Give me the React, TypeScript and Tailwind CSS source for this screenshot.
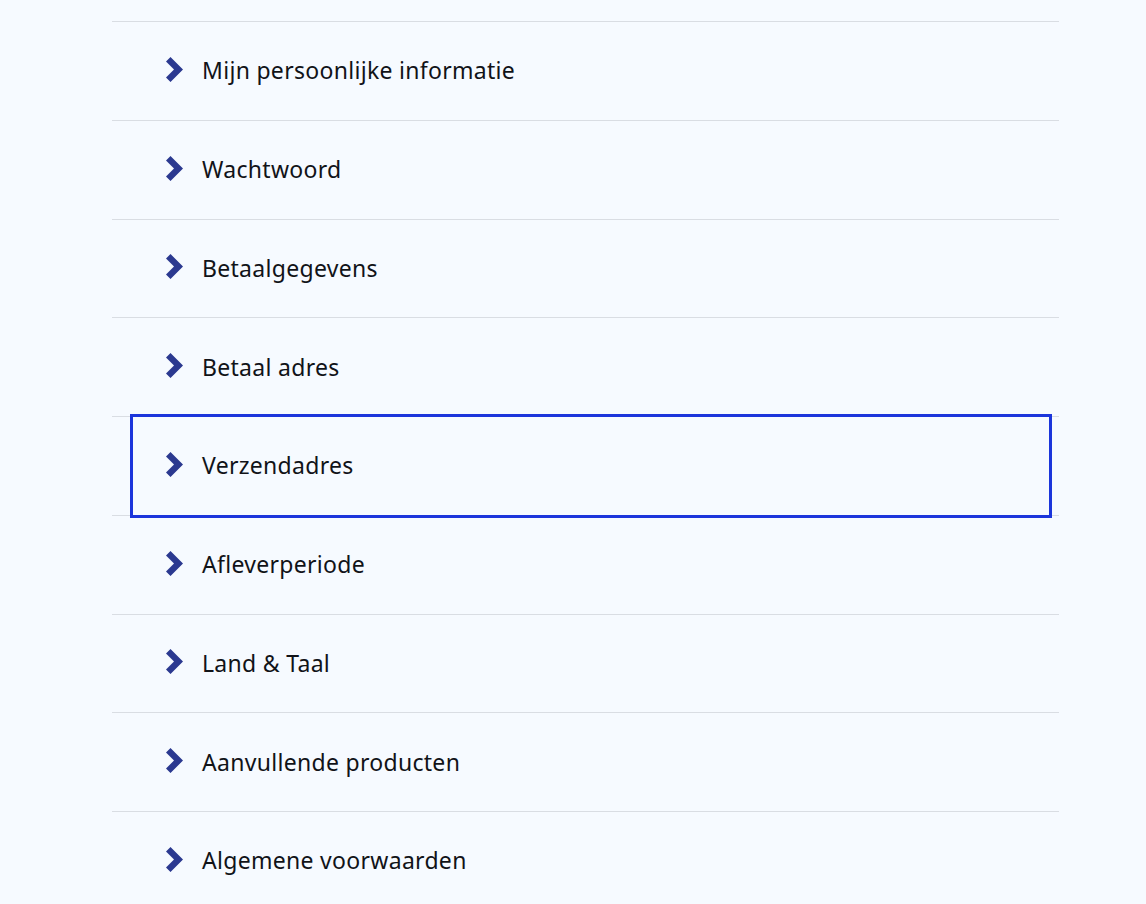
import React from 'react';

const items = [
  'Mijn persoonlijke informatie',
  'Wachtwoord',
  'Betaalgegevens',
  'Betaal adres',
  'Verzendadres',
  'Afleverperiode',
  'Land & Taal',
  'Aanvullende producten',
  'Algemene voorwaarden',
];

const Chevron = () => (
  <svg width="19" height="25" viewBox="0 0 19 25" className="shrink-0">
    <polygon points="0,4.5 4.5,0 17,12.5 4.5,25 0,20.5 8,12.5" fill="#2b3990" />
  </svg>
);

const App: React.FC = () => {
  return (
    <div
      className="min-h-screen w-full bg-[#f6faff] overflow-hidden"
      style={{ fontFamily: '"Noto Sans", Lato, sans-serif' }}
    >
      <div className="ml-[112px] w-[947px] pt-[21px]">
        {items.map((label, i) => (
          <div key={i} className="h-[98.75px] border-t border-[#d9dde3] pl-[21px] pr-[10px] flex">
            <a
              href="#"
              className={
                'flex flex-1 items-center pl-[33px] text-[23px] tracking-[0.3px] text-[#111318] ' +
                (label === 'Verzendadres' ? 'outline-3 outline-[#1b35db]' : '')
              }
            >
              <span className="-mt-[3px]">
                <Chevron />
              </span>
              <span className="ml-[17px] leading-none">{label}</span>
            </a>
          </div>
        ))}
      </div>
    </div>
  );
};

export default App;
